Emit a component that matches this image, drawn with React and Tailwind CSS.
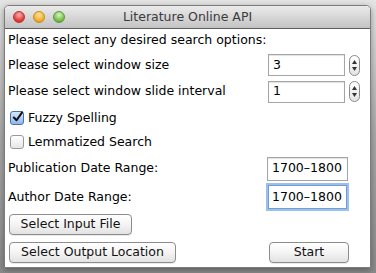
import React, { useState } from 'react';

const font = { fontFamily: '"DejaVu Sans", "Liberation Sans", sans-serif' };

const Stepper = () => (
    <div className="ml-[4px] flex h-[21px] w-[11px] flex-col items-center justify-center gap-[3px] rounded-full border border-[#8a8a8a] bg-gradient-to-b from-white to-[#e4e4e4]">
        <svg width="5" height="4" viewBox="0 0 5 4"><path d="M2.5 0 L5 4 L0 4 Z" fill="#333" /></svg>
        <svg width="5" height="4" viewBox="0 0 5 4"><path d="M0 0 L5 0 L2.5 4 Z" fill="#333" /></svg>
    </div>
);

const Checkbox = ({ checked, onChange }) => (
    <button
        onClick={onChange}
        className={`flex h-[14px] w-[14px] items-center justify-center rounded-[3px] border ${checked ? 'border-[#4a6fa5] bg-gradient-to-b from-[#d4e6fb] to-[#8db8ec]' : 'border-[#9a9a9a] bg-gradient-to-b from-white to-[#e6e6e6]'}`}
    >
        {checked && (
            <svg width="12" height="12" viewBox="0 0 12 12" className="-mt-[2px] ml-[1px]">
                <path d="M2 6.5 L5 9.5 L11 1" stroke="#111" strokeWidth="2.2" fill="none" strokeLinecap="round" strokeLinejoin="round" />
            </svg>
        )}
    </button>
);

const MacButton = ({ children, className = '' }) => (
    <button className={`flex h-[21px] items-center justify-center rounded-[4px] border border-[#8c8c8c] bg-gradient-to-b from-white via-[#f4f4f4] to-[#e2e2e2] text-[12.5px] text-[#111] shadow-[0_1px_0_rgba(0,0,0,0.08)] ${className}`}>
        {children}
    </button>
);

export default function App() {
    const [fuzzy, setFuzzy] = useState(true);
    const [lemma, setLemma] = useState(false);

    return (
        <div className="h-[273px] w-[376px] overflow-hidden bg-gradient-to-b from-[#e4e4e4] via-[#a9a9a9] to-[#8a8a8a] pl-[4px] pt-[5px]" style={font}>
            <div className="flex h-[263px] w-[367px] flex-col overflow-hidden rounded-t-[5px] border border-[#7c7c7c] bg-white shadow-[0_2px_6px_rgba(0,0,0,0.35)]">
                {/* title bar */}
                <div className="relative flex h-[23px] shrink-0 items-center justify-center border-b border-[#5e5e5e] bg-gradient-to-b from-[#ebebeb] to-[#c3c3c3]">
                    <div className="absolute left-[8px] top-[5px] flex gap-[8px]">
                        <span className="h-[12px] w-[12px] rounded-full border border-[#b33] bg-[radial-gradient(circle_at_50%_30%,#ffb3b3,#e0443e_60%,#b22)]" />
                        <span className="h-[12px] w-[12px] rounded-full border border-[#c8901c] bg-[radial-gradient(circle_at_50%_30%,#ffe3a0,#f2b133_60%,#c8891a)]" />
                        <span className="h-[12px] w-[12px] rounded-full border border-[#5a9a3a] bg-[radial-gradient(circle_at_50%_30%,#d6f5bf,#7cc152_60%,#4f9a2c)]" />
                    </div>
                    <span className="text-[12.5px] text-[#3a3a3a]">Literature Online API</span>
                </div>

                {/* content */}
                <div className="flex flex-col whitespace-nowrap px-[3px] text-[12.5px] text-black">
                    <div className="flex h-[22px] items-center">Please select any desired search options:</div>

                    <div className="mt-[2px] flex h-[24px] items-center">
                        <span className="flex-1">Please select window size</span>
                        <div className="flex h-[22px] w-[77px] items-center border border-[#a5a5a5] px-[4px] shadow-[inset_0_1px_1px_rgba(0,0,0,0.12)]">3</div>
                        <Stepper />
                        <span className="w-[7px]" />
                    </div>

                    <div className="mt-[3px] flex h-[23px] items-center">
                        <span className="flex-1">Please select window slide interval</span>
                        <div className="flex h-[22px] w-[77px] items-center border border-[#a5a5a5] px-[4px] shadow-[inset_0_1px_1px_rgba(0,0,0,0.12)]">1</div>
                        <Stepper />
                        <span className="w-[7px]" />
                    </div>

                    <div className="mt-[3px] flex h-[24px] items-center gap-[4px] pl-[2px]">
                        <Checkbox checked={fuzzy} onChange={() => setFuzzy(!fuzzy)} />
                        <span>Fuzzy Spelling</span>
                    </div>

                    <div className="flex h-[24px] items-center gap-[4px] pl-[2px]">
                        <Checkbox checked={lemma} onChange={() => setLemma(!lemma)} />
                        <span>Lemmatized Search</span>
                    </div>

                    <div className="mt-[2px] flex h-[25px] items-center">
                        <span className="flex-1">Publication Date Range:</span>
                        <div className="flex h-[24px] w-[81px] items-center overflow-hidden border border-[#a5a5a5] px-[4px] shadow-[inset_0_1px_1px_rgba(0,0,0,0.12)]">1700–1800</div>
                        <span className="w-[19px]" />
                    </div>

                    <div className="mt-[3px] flex h-[26px] items-center">
                        <span className="flex-1">Author Date Range:</span>
                        <div className="flex h-[24px] w-[79px] items-center overflow-hidden border border-[#6d9fd6] px-[3px] shadow-[0_0_0_2px_#9cc0ea]">1700–1800</div>
                        <span className="w-[20px]" />
                    </div>

                    <div className="mt-[4px] flex">
                        <MacButton className="ml-[1px] w-[123px]">Select Input File</MacButton>
                    </div>

                    <div className="mt-[7px] flex items-center">
                        <MacButton className="ml-[1px] w-[167px]">Select Output Location</MacButton>
                        <span className="flex-1" />
                        <MacButton className="w-[80px]">Start</MacButton>
                        <span className="w-[18px]" />
                    </div>
                </div>
            </div>
        </div>
    );
}
